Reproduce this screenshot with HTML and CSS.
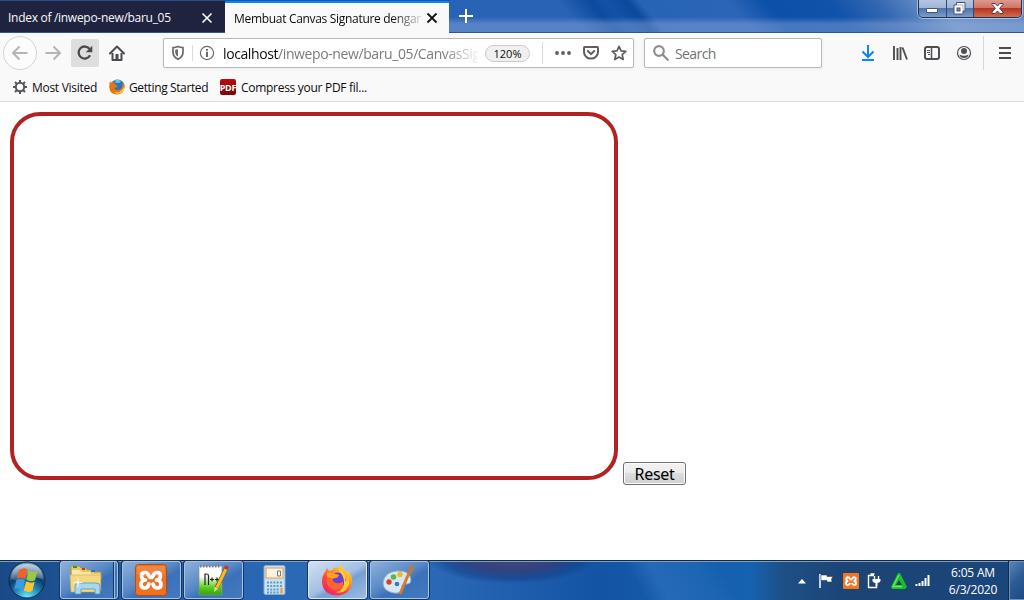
FILE: index.html
```html
<!DOCTYPE html>
<html lang="en">
<head>
    <meta charset="UTF-8">
    <meta name="viewport" content="width=device-width, initial-scale=1.0">
    <title>Membuat Canvas Signature</title>
    <link rel="stylesheet" href="styles.css">
</head>
<body>
    <div class="titlebar">
        <div class="tab">
            <span class="tab-title">Index of /inwepo-new/baru_05</span>
            <svg class="tab-close" width="12" height="12" viewBox="0 0 12 12"><path d="M1.5 1.5l9 9M10.5 1.5l-9 9" stroke="#fff" stroke-width="1.6"/></svg>
        </div>
        <div class="tab active">
            <span class="tab-title">Membuat Canvas Signature dengan</span>
            <svg class="tab-close" width="12" height="12" viewBox="0 0 12 12"><path d="M1.5 1.5l9 9M10.5 1.5l-9 9" stroke="#111" stroke-width="1.8"/></svg>
        </div>
        <svg class="new-tab" width="14" height="14" viewBox="0 0 14 14"><path d="M7 0v14M0 7h14" stroke="#fff" stroke-width="2"/></svg>
        <div class="window-buttons">
            <div class="win-btn">
                <svg width="13" height="6" viewBox="0 0 13 6"><rect x=".5" y=".5" width="11" height="4" rx=".5" fill="#fff" stroke="#4b5569"/></svg>
            </div>
            <div class="win-btn restore">
                <svg width="13" height="13" viewBox="0 0 13 13"><path d="M3.5.5h8.500v8.500h-2v3h-9v-9h2.500z" fill="#fff" stroke="#4b5569"/><path d="M10 9V3H3.500" fill="none" stroke="#8b93a3" stroke-width=".7"/><rect x="4" y="6" width="3" height="3" fill="#6d8fbf" stroke="#4b5569"/></svg>
            </div>
            <div class="win-btn close">
                <svg width="13" height="11" viewBox="0 0 13 11"><path d="M1 .5h3.200L6.500 3 8.800.5H12v1L8.600 5.300 12 9v1.500H8.800L6.500 8 4.200 10.500H1V9l3.400-3.700L1 1.500z" fill="#fff" stroke="#5c3a44"/></svg>
            </div>
        </div>
    </div>

    <div class="navbar">
        <div class="nav-btn back">
            <svg width="16" height="16" viewBox="0 0 16 16"><path d="M15.500 8H1.500M7.500 1.500L1 8l6.500 6.500" fill="none" stroke="#b5b5b6" stroke-width="2"/></svg>
        </div>
        <div class="nav-btn forward">
            <svg width="16" height="16" viewBox="0 0 16 16"><path d="M.5 8h14M8.500 1.500L15 8l-6.500 6.500" fill="none" stroke="#b5b5b6" stroke-width="2"/></svg>
        </div>
        <div class="nav-btn reload">
            <svg width="16" height="16" viewBox="0 0 16 16"><path d="M13 10.200A6 6 0 1 1 12.500 4" fill="none" stroke="#4a4a4f" stroke-width="2.300"/><path d="M15.300.8v6.500H8.700z" fill="#4a4a4f"/></svg>
        </div>
        <div class="nav-btn home">
            <svg width="16" height="16" viewBox="0 0 16 16"><path d="M1 8.500L8 1.500l7 7" fill="none" stroke="#4a4a4f" stroke-width="2" stroke-linecap="round" stroke-linejoin="round"/><path d="M3.500 8v7h9V8" fill="none" stroke="#4a4a4f" stroke-width="2" stroke-linejoin="round"/><path d="M6.500 15V9h3v6z" fill="#4a4a4f"/></svg>
        </div>

        <div class="urlbar">
            <svg class="shield" width="14" height="16" viewBox="0 0 14 16"><path d="M7 1.500c2 .8 3.500 1 5 1.200V7c0 3.500-2 5.800-5 7.300C4 12.800 2 10.500 2 7V2.700c1.500-.2 3-.4 5-1.200z" fill="none" stroke="#6a6a6e" stroke-width="1.700"/><path d="M7 4.200v7.500C5.200 10.500 4.200 9 4.200 7V4.700z" fill="#6a6a6e"/></svg>
            <svg class="info" width="16" height="16" viewBox="0 0 16 16"><circle cx="8" cy="8" r="6.600" fill="none" stroke="#6a6a6e" stroke-width="1.200"/><path d="M7 6.800h2V12H7zM7 4h2v1.700H7z" fill="#6a6a6e"/></svg>
            <span class="url"><b>localhost</b>/inwepo-new/baru_05/CanvasSignature</span>
            <span class="zoom">120%</span>
            <span class="url-actions">
                <svg width="16" height="16" viewBox="0 0 16 16"><circle cx="2" cy="8" r="1.900"/><circle cx="8" cy="8" r="1.900"/><circle cx="14" cy="8" r="1.900"/></svg>
                <svg width="16" height="16" viewBox="0 0 16 16"><path d="M1.700 2h12.600q.7 0 .7.700V7a7 6.600 0 0 1-14 0V2.700Q1 2 1.700 2z" fill="none" stroke="#5e5e62" stroke-width="2"/><path d="M4.800 6L8 9.200 11.200 6" fill="none" stroke="#5e5e62" stroke-width="2" stroke-linecap="round"/></svg>
                <svg width="16" height="16" viewBox="0 0 16 16"><path d="M8 1.300l2 4.500 4.800.5-3.600 3.300 1 4.900L8 12l-4.200 2.500 1-4.900L1.200 6.300 6 5.800z" fill="none" stroke="#5e5e62" stroke-width="1.700" stroke-linejoin="round"/></svg>
            </span>
        </div>

        <div class="searchbar">
            <svg width="17" height="16" viewBox="0 0 17 16"><circle cx="6" cy="6" r="4.800" fill="none" stroke="#8e8e90" stroke-width="2.200"/><path d="M9.500 9.500l6 6" stroke="#8e8e90" stroke-width="2.200"/></svg>
            <span>Search</span>
        </div>

        <div class="tools">
            <svg width="16" height="16" viewBox="0 0 16 16"><path d="M8 0v12M2.500 6.500L8 12l5.500-5.500M2 15h12" fill="none" stroke="#0a84ff" stroke-width="2"/></svg>
            <svg width="16" height="16" viewBox="0 0 16 16"><path d="M2 1v14M5.500 3v12M8.500 2V15M10.500 2.500L15 14.500" fill="none" stroke="#4f4f53" stroke-width="1.900"/></svg>
            <svg width="16" height="16" viewBox="0 0 16 16"><rect x="1" y="2" width="14" height="12" rx="2" fill="none" stroke="#4f4f53" stroke-width="2"/><path d="M7.500 2v12" stroke="#4f4f53" stroke-width="1.500"/><path d="M3 5.500h3M3 7.500h3M4 9.500h2" stroke="#4f4f53"/></svg>
            <svg width="16" height="16" viewBox="0 0 16 16"><circle cx="8" cy="8" r="6.500" fill="none" stroke="#4f4f53" stroke-width="1.200"/><circle cx="8" cy="6" r="3" fill="#4f4f53"/><path d="M3.500 9.500q4.500 2.500 9 0Q12 13 8 13T3.500 9.500z" fill="#4f4f53"/></svg>
        </div>
        <div class="menu">
            <svg width="12" height="12" viewBox="0 0 12 12"><path d="M0 1h12M0 6h12M0 11h12" stroke="#4a4a4f" stroke-width="2"/></svg>
        </div>
    </div>

    <div class="bookmarks">
        <div class="bookmark most">
            <svg width="16" height="16" viewBox="0 0 16 16"><circle cx="8" cy="8" r="4.200" fill="none" stroke="#55555a" stroke-width="2"/><path d="M8 1v3M8 12v3M1 8h3M12 8h3M3 3l2.200 2.200M10.800 10.800L13 13M13 3l-2.200 2.200M5.200 10.800L3 13" stroke="#55555a" stroke-width="2"/></svg>
            <span>Most Visited</span>
        </div>
        <div class="bookmark started">
            <svg width="16" height="16" viewBox="0 0 16 16"><circle cx="8.500" cy="7.500" r="7" fill="#2878b8"/><path d="M6 1.500q4-2 6 1-2 2-5 1.500z" fill="#70c3e8"/><path d="M1 2q.3 1.500 2 1.500L6 3 5.500 5 9 7l-2 1.500-2 .5q2 3 5 2 3.500-1 3.500-5V3q2.500 3 2 6-1 6-7.500 6.500Q1 15.500.3 8.500.2 4.500 1 2z" fill="#e87512"/><path d="M12.500 11.500q2-2 2.700-5 .8 5-2.700 7-4 2.500-8-.5 5 1.500 8-1.500z" fill="#ffd052"/></svg>
            <span>Getting Started</span>
        </div>
        <div class="bookmark pdf">
            <span class="pdf-icon">PDF</span>
            <span>Compress your PDF fil...</span>
        </div>
    </div>

    <div class="page">
        <canvas class="signature" id="signature" width="600" height="360"></canvas>
        <button class="reset" id="reset">Reset</button>
    </div>

    <div class="taskbar">
        <div class="start">
            <svg width="38" height="38" viewBox="0 0 38 38">
                <defs>
                    <radialGradient id="orb" cx=".5" cy="1" r=".95"><stop offset="0" stop-color="#6ff0ff"/><stop offset=".35" stop-color="#2391bd"/><stop offset=".65" stop-color="#0c3c6b"/><stop offset="1" stop-color="#6a96b8"/></radialGradient>
                    <linearGradient id="shine" x1="0" y1="0" x2="0" y2="1"><stop offset="0" stop-color="#fff" stop-opacity=".6"/><stop offset="1" stop-color="#fff" stop-opacity=".15"/></linearGradient>
                </defs>
                <circle cx="19" cy="19" r="18" fill="url(#orb)" stroke="#0d2c50"/>
                <path d="M3 18Q4 3 19 3t16 15q-10-3-16 0t-16 0z" fill="url(#shine)"/>
                <path d="M11 9q5-3 8.500-.5L17.300 18q-4-2.500-8.500-.3z" fill="#f0622c"/>
                <path d="M20.500 9.500q5 2.500 9 .3L27 19.300q-4.500 2-8.500-.5z" fill="#9bc840"/>
                <path d="M8.500 19q4.500-2.200 8.500.5L14.700 29q-4-2.800-8.500-.7z" fill="#3d9be0"/>
                <path d="M18.200 20.300q4.500 2.500 8.500.5L24.300 30q-4.500 2-8.500-.5z" fill="#fcc530"/>
            </svg>
        </div>
        <div class="task stacked">
            <svg width="34" height="32" viewBox="0 0 34 32">
                <path d="M2 8V2.500Q2 2 3 2h7l2 2h5l1 2h6l1 2h7v18H2z" fill="#e8c767" stroke="#b58f36" stroke-width=".7"/>
                <path d="M4 2h4v2H4z" fill="#20a020"/><path d="M13 4h3v2h-3z" fill="#d03020"/><path d="M22 6h4v2h-4z" fill="#2876c8"/>
                <path d="M3 6h8l2 2h8l1 2h9v17H3z" fill="#f8e8a2"/><path d="M1 11h31l-1 17H2z" fill="#f4d982" stroke="#d0a850" stroke-width=".6"/>
                <path d="M6 30V22q0-3 4-3h17q4 0 4 3v8h-5v-5H12v5z" fill="#a6d9ef" stroke="#5398bd" stroke-width=".8"/>
                <path d="M9 14v9M4.500 18.500h9" stroke="#fff" stroke-width=".8"/><circle cx="9" cy="18.500" r="1.500" fill="#fff"/>
            </svg>
        </div>
        <div class="task">
            <svg width="32" height="32" viewBox="0 0 32 32"><rect x=".5" y=".5" width="31" height="31" rx="3" fill="#ee7122" stroke="#b94b12"/><path d="M2 2h28v8Q16 15 2 10z" fill="#fff" opacity=".15"/><path d="M10.500 16Q6.500 15.500 6.500 12T10 8.500q2.500 0 3.500 2.500 1 2.500 2.500 2.500t2.500-2.500Q19.500 8.500 22 8.500q3.500 0 3.500 3.500t-4 4q4.500.5 4.500 4.300Q26 24 22.300 24q-3.300 0-4.300-4M10.500 16Q6 16.500 6 20.300 6 24 9.700 24q3.300 0 4.300-4" fill="none" stroke="#fff" stroke-width="3.700" stroke-linecap="round" stroke-linejoin="round"/></svg>
        </div>
        <div class="task">
            <svg width="32" height="32" viewBox="0 0 32 32">
                <defs><linearGradient id="pad" x1="0" y1="0" x2="0" y2="1"><stop offset=".35" stop-color="#fff"/><stop offset=".75" stop-color="#58cd18"/><stop offset="1" stop-color="#36a010"/></linearGradient></defs>
                <path d="M2 2h23v29H2z" fill="url(#pad)" stroke="#899187" stroke-width=".7"/>
                <path d="M3 2.500h21" stroke="#777" stroke-width="2" stroke-dasharray="1.500 1.500"/>
                <path d="M8 21V10h2q1.500 0 1.500 2v9M13 15.500h4M15 13.500v4M18 15.500h4M20 13.500v4" fill="none" stroke="#222" stroke-width="1.200"/>
                <path d="M29 5L19.500 24" stroke="#7a551b" stroke-width="4.400"/><path d="M29 5L20 23.500" stroke="#f5bd28" stroke-width="3"/><path d="M17.700 22.500l3.600 2-4.300 3.500z" fill="#e8d3a2"/><path d="M28.300 1l3.500 2-1.500 3-3.600-2z" fill="#bd3c38"/>
            </svg>
        </div>
        <div class="task idle">
            <svg width="24" height="32" viewBox="0 0 24 32"><rect x="1" y="1.500" width="21" height="29" rx="1.500" fill="#cbe1f2" stroke="#7facd4"/><rect x="3" y="4" width="17" height="10" fill="#fdf4df" stroke="#e79b4b"/><path d="M14.500 7h3v5h-3z" fill="none" stroke="#687d8f"/><path d="M4 18.500h12M4 22h12M4 25.500h12M4 28.500h12M17 18.500h3M17 22h3" stroke="#609cc8" stroke-width="2" stroke-dasharray="2 1.200"/><path d="M18.500 24v5.500" stroke="#ef9b38" stroke-width="2.200"/></svg>
        </div>
        <div class="task current">
            <svg width="32" height="32" viewBox="0 0 32 32">
                <defs><linearGradient id="fox" x1=".9" y1="0" x2=".2" y2="1"><stop offset="0" stop-color="#fff44f"/><stop offset=".35" stop-color="#ff9b24"/><stop offset=".65" stop-color="#ff453e"/><stop offset="1" stop-color="#e52572"/></linearGradient></defs>
                <path d="M4 8l2-4 2 3 3-1Q14 2 19 4V1q5 3 6 8l2-2q5 6 4 12-2 12-15 12.500Q2 31 1 18q0-6 3-10z" fill="url(#fox)"/>
                <circle cx="17" cy="16" r="7.500" fill="#6a3ed0"/>
                <path d="M6 9q5-2 8 1l4 1q-1 3-6 3.500-1 3.500 3 4.500 5 1 7-2 1 8-7 9-7 0-9-7-1-5 0-10z" fill="#ff642f"/>
                <path d="M6 9q5-2 8 1l4 1q-1 3-6 3.500L6 13z" fill="#ffa129"/>
                <path d="M18 4q8 5 6 14 3-3 2-8 5 9-1 16-5 4-10 2 9-2 8-11Q22 10 18 8z" fill="#ffcb35"/>
            </svg>
        </div>
        <div class="task">
            <svg width="34" height="32" viewBox="0 0 34 32">
                <path d="M15 7Q28 6 29 16q0 4-4 4-5-1-5 3 1 7-8 6Q1 27 1 19 2 8 15 7z" fill="#d7e8f5" stroke="#91afc9"/>
                <circle cx="7" cy="18" r="2.700" fill="#d6402f"/><circle cx="11.500" cy="13" r="2.800" fill="#5bb83a"/><circle cx="18" cy="10.500" r="2.800" fill="#f0ba2b"/><circle cx="15" cy="20" r="2.300" fill="#3d78bb"/>
                <path d="M27 9L18 30" stroke="#d27b2b" stroke-width="3"/><path d="M25 9l2-6 5-2v4l-3 6z" fill="#b07d50"/>
            </svg>
        </div>

        <div class="tray">
            <svg width="8" height="5" viewBox="0 0 8 5"><path d="M0 4.500L4 0l4 4.500z" fill="#fff"/></svg>
            <svg width="16" height="16" viewBox="0 0 16 16"><path d="M1 1v14" stroke="#fff" stroke-width="1.500"/><path d="M2 2h6v1.500h6L12.500 6l.5 3H8V7.500H2z" fill="#fff" stroke="#18314c" stroke-width=".5"/></svg>
            <svg width="16" height="16" viewBox="0 0 32 32"><rect width="32" height="32" rx="2" fill="#f37623"/><path d="M10.500 16Q6.500 15.500 6.500 12T10 8.500q2.500 0 3.500 2.500 1 2.500 2.500 2.500t2.500-2.500Q19.500 8.500 22 8.500q3.500 0 3.500 3.500t-4 4q4.500.5 4.500 4.300Q26 24 22.300 24q-3.300 0-4.300-4M10.500 16Q6 16.500 6 20.300 6 24 9.700 24q3.300 0 4.300-4" fill="none" stroke="#fff" stroke-width="3.700"/></svg>
            <svg width="16" height="16" viewBox="0 0 16 16"><path d="M7 2.500H1.500v12h8V12M3.500 1h4" fill="none" stroke="#fff" stroke-width="1.400"/><path d="M7.500 3v3M11.500 3v3" stroke="#fff" stroke-width="1.400"/><path d="M5.500 6h8v2q-1 2-3 2v3h-2v-3q-3-.5-3-2z" fill="#fff"/></svg>
            <svg width="16" height="16" viewBox="0 0 16 16"><path d="M7 0h2l7 14-2 2H1l-1-2z" fill="#1cbd27"/><path d="M8 7l-3 5h6z" fill="#17466c"/><path d="M8 2L2 13.500h9" fill="none" stroke="#6bf05c" stroke-width="1.300"/></svg>
            <svg width="16" height="14" viewBox="0 0 16 14"><path d="M1.500 12v-2M4.500 12V9M7.500 12V7M10.500 12V4M13.500 12V1" stroke="#fff" stroke-width="2"/></svg>
        </div>
        <div class="clock">
            <div>6:05 AM</div>
            <div>6/3/2020</div>
        </div>
        <div class="show-desktop"></div>
    </div>

    <script>
        const canvas = document.getElementById('signature');
        const ctx = canvas.getContext('2d');
        let drawing = false;

        canvas.addEventListener('mousedown', (e) => {
            drawing = true;
            ctx.beginPath();
            ctx.moveTo(e.offsetX, e.offsetY);
        });

        canvas.addEventListener('mousemove', (e) => {
            if (!drawing) return;
            ctx.lineTo(e.offsetX, e.offsetY);
            ctx.stroke();
        });

        window.addEventListener('mouseup', () => {
            drawing = false;
        });

        document.getElementById('reset').addEventListener('click', () => {
            ctx.clearRect(0, 0, canvas.width, canvas.height);
        });
    </script>
</body>
</html>
```

FILE: styles.css
```css
* {
    margin: 0;
    padding: 0;
    box-sizing: border-box;
}

body {
    width: 1024px;
    height: 600px;
    overflow: hidden;
    display: flex;
    flex-direction: column;
    background: #fff;
    color: #0c0c0d;
    font-family: "Open Sans", "Noto Sans", sans-serif;
    font-size: 12px;
}

svg {
    display: block;
    flex: none;
}

/* Title bar */
.titlebar {
    height: 33px;
    display: flex;
    padding-top: 1px;
    border-bottom: 1px solid #2e5791;
    background:
        linear-gradient(90deg, #24528c 450px, transparent 450px) 0 0 / 1024px 1px no-repeat,
        linear-gradient(transparent 17px, rgba(150, 175, 220, 0.42) 24px),
        linear-gradient(50deg, #2863b5 448px, #0c4a9e 472px, #0f4fa4 478px, #1251a6 485px, #0b499d 500px, #2864b6 510px, #2a65b7 578px, #0c50a9 606px, #1152aa 655px, #3267b2 690px, #6f96cb 735px, #5d86bf 805px);
}

.tab {
    width: 225px;
    padding: 1px 12px 0 8px;
    display: flex;
    align-items: center;
    background: #202340;
    color: #f9f9fa;
    letter-spacing: -0.29px;
}

.tab.active {
    width: 224px;
    padding: 0 12px 0 9px;
    height: 32px;
    background: #f9f9fa;
    border-top: 2px solid #0a84ff;
    color: #0c0c0d;
}

.tab-title {
    flex: 1;
    overflow: hidden;
    white-space: nowrap;
}

.active .tab-title {
    flex: none;
    width: 187px;
    margin-right: 5px;
    letter-spacing: -0.31px;
    -webkit-mask-image: linear-gradient(90deg, #000 158px, transparent 192px);
    mask-image: linear-gradient(90deg, #000 158px, transparent 192px);
}

.tab-close {
    position: relative;
    top: 0.5px;
}

.active .tab-close {
    top: 0;
}

.new-tab {
    margin: 8px 0 0 10px;
}

.window-buttons {
    display: flex;
    width: 104px;
    height: 18px;
    margin: -1px 2px 0 auto;
    border: 1px solid #23324e;
    border-top: none;
    border-radius: 0 0 5px 5px;
    box-shadow: 0 0 0 1px rgba(255, 255, 255, 0.45);
    overflow: hidden;
}

.win-btn {
    width: 28px;
    display: flex;
    justify-content: center;
    padding-top: 8px;
    border-right: 1px solid #34496f;
    background: linear-gradient(#b4c6e0 0, #9db4d7 50%, #4f74ac 50%, #7b9ccb 100%);
}

.win-btn.restore {
    width: 27px;
    padding: 2px 2px 0 0;
}

.win-btn.close {
    width: 47px;
    padding-top: 3px;
    border-right: none;
    background: linear-gradient(#dc9a8d 0, #cf7464 48%, #b63421 50%, #cf6d4f 100%);
}

/* Navigation toolbar */
.navbar {
    height: 41px;
    display: flex;
    align-items: center;
    padding: 0 0 1px 4px;
    background: #f9f9fa;
}

.nav-btn {
    width: 28px;
    height: 28px;
    display: flex;
    align-items: center;
    justify-content: center;
    border-radius: 2px;
}

.nav-btn.back {
    width: 34px;
    height: 34px;
    margin-left: -1px;
    border: 1px solid #d3d3d4;
    border-radius: 50%;
    background: #fcfcfc;
}

.nav-btn.forward {
    width: 32px;
    margin-right: 2px;
}

.nav-btn.reload {
    background: #dededf;
}

.nav-btn.home {
    margin: 0 32px 0 4px;
}

.urlbar,
.searchbar {
    height: 30px;
    display: flex;
    align-items: center;
    background: #fff;
    border: 1px solid #b9b9ba;
    border-radius: 2px;
    box-shadow: 0 1px 3px rgba(0, 0, 0, 0.06);
    font-size: 14px;
}

.urlbar {
    width: 471px;
    padding-left: 7px;
}

.info {
    box-sizing: content-box;
    margin-left: 7px;
    padding-left: 6px;
    border-left: 1px solid #dcdcdc;
}

.url {
    width: 255px;
    margin-left: 8px;
    padding-top: 1px;
    overflow: hidden;
    white-space: nowrap;
    color: #7b7b7d;
    letter-spacing: -0.4px;
    -webkit-mask-image: linear-gradient(90deg, #000 220px, transparent 258px);
    mask-image: linear-gradient(90deg, #000 220px, transparent 258px);
}

.url b {
    color: #0c0c0d;
    font-weight: normal;
}

.zoom {
    width: 45px;
    height: 17px;
    margin-left: 7px;
    border: 1px solid #cbcbcc;
    border-radius: 9px;
    background: #f0f0f1;
    font-size: 11px;
    line-height: 15px;
    text-align: center;
}

.url-actions {
    display: flex;
    gap: 12px;
    margin-left: 12px;
    padding: 3px 0 3px 12px;
    border-left: 1px solid #dcdcdc;
    fill: #5e5e62;
}

.searchbar {
    width: 178px;
    margin-left: 10px;
    padding-left: 8px;
    gap: 5px;
    color: #737375;
    letter-spacing: -0.6px;
}

.searchbar span {
    padding-top: 1px;
}

.tools {
    display: flex;
    gap: 16px;
    margin-left: 38px;
}

.menu {
    height: 34px;
    display: flex;
    align-items: center;
    margin-left: 11px;
    padding-left: 15px;
    border-left: 1px solid #d7d7d8;
}

/* Bookmarks toolbar */
.bookmarks {
    height: 28px;
    display: flex;
    padding: 0 0 1px 12px;
    background: #f9f9fa;
    border-bottom: 1px solid #dedede;
    letter-spacing: -0.29px;
}

.bookmark {
    display: flex;
    align-items: center;
    gap: 4px;
    white-space: nowrap;
}

.bookmark.most {
    width: 97px;
}

.bookmark.started {
    width: 111px;
    letter-spacing: -0.38px;
}

.bookmark.pdf {
    gap: 5px;
}

.pdf-icon {
    width: 16px;
    height: 16px;
    display: flex;
    align-items: center;
    justify-content: center;
    border-radius: 2px;
    background: linear-gradient(#b90d0d, #7c0505);
    color: #fff;
    font-size: 9px;
    font-weight: bold;
    letter-spacing: -0.2px;
}

/* Page */
.page {
    flex: 1;
    display: flex;
    align-items: flex-start;
    padding: 10px;
}

.signature {
    box-sizing: content-box;
    border: 4px solid #b22222;
    border-radius: 30px;
}

.reset {
    width: 63px;
    height: 23px;
    margin: 350px 0 0 5px;
    padding-top: 1px;
    border: 1px solid #707070;
    border-radius: 3px;
    box-shadow: inset 0 0 0 1px #fbfbfb;
    background: linear-gradient(#f2f2f2 0, #ebebeb 50%, #dddddd 50%, #cfcfcf 100%);
    font-family: "Noto Sans", sans-serif;
    font-size: 16px;
    line-height: 21px;
    letter-spacing: -0.3px;
    white-space: nowrap;
}

/* Taskbar */
.taskbar {
    height: 40px;
    display: flex;
    border-top: 1px solid #14273f;
    box-shadow: inset 0 1px 0 #78a2d0;
    background:
        radial-gradient(ellipse 86px 27px at 512px -4px, #46467a 0, rgba(50, 62, 120, 0.85) 55%, rgba(15, 60, 130, 0.5) 80%, transparent 100%),
        linear-gradient(60deg, transparent 560px, rgba(60, 130, 205, 0.4) 580px, rgba(60, 130, 205, 0.2) 620px, transparent 640px),
        linear-gradient(90deg, #1a4a86 0, #1d5090 55px, #2662ac 180px, #2b69b5 290px, #2a68b5 440px, #1454a5 600px, #1662b0 750px, #1d4f85 785px, #1c4474 850px, #1a467c 1024px);
}

.start {
    width: 60px;
    padding-left: 8px;
}

.task {
    width: 59px;
    height: 38px;
    margin-right: 3px;
    padding-right: 2px;
    display: flex;
    align-items: center;
    justify-content: center;
    border: 1px solid #a5c3e4;
    border-radius: 3px;
    box-shadow: 0 0 0 1px #18375f;
    background: linear-gradient(150deg, #8eb0db 0, #5889c6 45%, #3b71b8 60%, #437abe 100%);
}

.task.stacked {
    width: 58px;
    padding-right: 7px;
    margin-right: 4px;
    background:
        linear-gradient(90deg, transparent 52px, #17375f 52px, #17375f 53px, #9abce0 53px, #9abce0 54px, transparent 54px),
        linear-gradient(150deg, #8eb0db 0, #5889c6 45%, #3b71b8 60%, #437abe 100%);
}

.task.idle {
    border-color: transparent;
    box-shadow: none;
    background: none;
}

.task.current {
    border-color: #dbe8f6;
    background: linear-gradient(150deg, #d2e0f1 0, #a2bfe2 50%, #76a0d2 60%, #9abce2 100%);
}

.tray {
    display: flex;
    align-items: center;
    gap: 8px;
    margin: 1px 2px 0 auto;
}

.tray svg:first-child {
    margin-right: 5px;
}

.clock {
    width: 76px;
    padding: 3px 0 0 4px;
    color: #fff;
    line-height: 17px;
    text-align: center;
    letter-spacing: -0.2px;
}

.show-desktop {
    width: 15px;
    border: 1px solid #6d93bd;
    border-right: none;
    box-shadow: -1px 0 0 #132b4b;
    background: linear-gradient(135deg, #5784b5 0, #2c5b94 50%, #1b4a85 100%);
}
```
